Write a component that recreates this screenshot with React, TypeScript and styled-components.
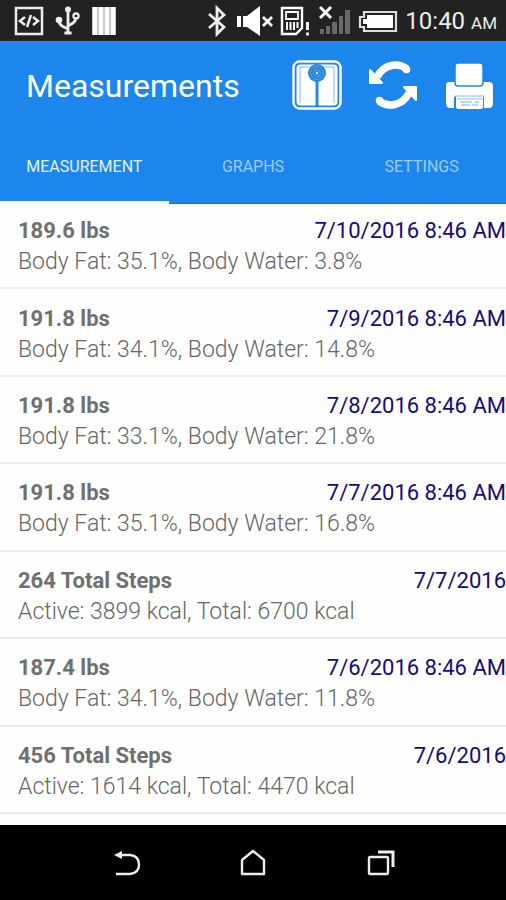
import React, { useState } from "react";
import styled, { createGlobalStyle } from "styled-components";

const GlobalStyle = createGlobalStyle`
  * { box-sizing: border-box; }
  body { margin: 0; background: #fefefe; font-family: Roboto, "Liberation Sans", sans-serif; }
  button { font: inherit; color: inherit; background: none; border: 0; padding: 0; margin: 0; cursor: pointer; }
`;

const Screen = styled.div`
  display: flex;
  flex-direction: column;
  min-height: 100vh;
`;

const StatusBar = styled.div`
  display: flex;
  align-items: center;
  justify-content: space-between;
  height: 41px;
  padding: 0 9px 0 14px;
  background: #222;
  color: #eee;
`;

const StatusGroup = styled.div<{ $gap: number }>`
  display: flex;
  align-items: center;
  gap: ${(p) => p.$gap}px;
`;

const Clock = styled.time`
  font-size: 24px;
  line-height: 30px;
  padding-top: 2px;
  white-space: nowrap;
`;

const Meridiem = styled.small`
  font-size: 17px;
`;

const Header = styled.header`
  background: #1d86ec;
  color: #fff;
`;

const AppBar = styled.div`
  display: flex;
  align-items: center;
  justify-content: space-between;
  height: 88px;
  padding: 0 12px 0 26px;
`;

const Title = styled.h1`
  margin: 0;
  padding-top: 2px;
  font-size: 32px;
  line-height: 40px;
  font-weight: 400;
`;

const Actions = styled.div`
  display: flex;
  align-items: center;
  gap: 26px;
`;

const IconButton = styled.button`
  display: flex;
`;

const Tabs = styled.div`
  display: grid;
  grid-template-columns: repeat(3, 1fr);
  height: 75px;
  border-bottom: 1px solid #176fd0;
`;

const Tab = styled.button<{ $active: boolean }>`
  && {
    padding-top: 4px;
    border-bottom: 3px solid ${(p) => (p.$active ? "#fff" : "transparent")};
    margin-bottom: -1px;
    font-size: 16px;
    line-height: 24px;
    color: ${(p) => (p.$active ? "#e4f1ff" : "#9dcbfa")};
  }
`;

const List = styled.ul`
  display: flex;
  flex: 1;
  flex-direction: column;
  margin: -2px 0 0;
  padding: 0 0 11px;
  list-style: none;
`;

const Row = styled.li`
  display: flex;
  flex: 1;
  flex-direction: column;
  justify-content: center;
  border-bottom: 2px solid #ececec;
  padding: 3px 0 0 18px;
  font-size: 22px;
  line-height: 31px;
  white-space: nowrap;
`;

const RowTop = styled.div`
  display: flex;
  justify-content: space-between;
`;

const Reading = styled.strong`
  font-weight: 700;
  color: #707070;
`;

const Stamp = styled.time`
  color: #160b7c;
`;

const Detail = styled.div`
  font-size: 23px;
  font-weight: 300;
  color: #666;
`;

const NavBar = styled.nav`
  display: grid;
  grid-template-columns: repeat(3, 1fr);
  height: 75px;
  padding: 0 63px;
  background: #000;
  color: #eee;
`;

const NavButton = styled.button`
  display: flex;
  align-items: center;
  justify-content: center;
`;

const CodeIcon = () => (
  <svg width="30" height="30" viewBox="0 0 30 30" fill="none" stroke="currentColor" strokeWidth="2.5">
    <rect x="2" y="2" width="26" height="26" />
    <path d="M11 11l-5 4 5 4M19 11l5 4-5 4M17 9l-4 12" />
  </svg>
);

const UsbIcon = () => (
  <svg width="26" height="30" viewBox="0 0 26 30" fill="none" stroke="currentColor" strokeWidth="2.8">
    <path d="M13 4v22M13 23l-6-3q-3-2-3-6M13 20l5-3q3-2 3-6" />
    <circle cx="13" cy="3.5" r="3" fill="currentColor" stroke="none" />
    <circle cx="4" cy="14" r="3.3" fill="currentColor" stroke="none" />
    <circle cx="21" cy="10" r="2.6" strokeWidth="2.2" />
    <path d="M10 26h6v2h-6z" fill="currentColor" strokeWidth="1.2" />
  </svg>
);

const BarsIcon = () => (
  <svg width="24" height="30" viewBox="0 0 24 30">
    <path d="M0 1h24v28H0z" fill="#c8c8c8" />
    <path d="M1 1h4v28H1zM7 1h4v28H7zM13 1h4v28h-4zM19 1h4v28h-4z" fill="#fff" />
  </svg>
);

const BluetoothIcon = () => (
  <svg width="18" height="32" viewBox="0 0 18 32" fill="none" stroke="currentColor" strokeWidth="2.8">
    <path d="M1 9l15 13-7 7V3l7 7L1 23" />
  </svg>
);

const MuteIcon = () => (
  <svg width="36" height="32" viewBox="0 0 36 32" fill="#fff">
    <path d="M0 11h4v11H0zM6 11h4L23 1v30L10 22H6z" />
    <path d="M26 12l9 9M35 12l-9 9" stroke="#fff" strokeWidth="2.8" />
  </svg>
);

const SimIcon = () => (
  <svg width="30" height="32" viewBox="0 0 30 32" fill="none" stroke="#fff" strokeWidth="2.4">
    <path d="M2 3h20v20l-6 6H2z" />
    <path d="M6 7h12v7H6z" strokeWidth="1.8" />
    <path d="M7 17v8M10.500 17v8M14 17v8M17.500 17v6" strokeWidth="2" />
    <path d="M27.500 17v8M27.500 27.500v3" strokeWidth="2.8" />
  </svg>
);

const SignalIcon = () => (
  <svg width="32" height="32" viewBox="0 0 32 32">
    <path d="M1 24h4v5H1zM7 21h4v8H7zM13 17h5v12h-5zM20 11h4v18h-4zM26 5h5v24h-5z" fill="#686868" />
    <path d="M1 2l11 11M12 2L1 13" stroke="#fff" strokeWidth="3" />
  </svg>
);

const BatteryIcon = () => (
  <svg width="40" height="24" viewBox="0 0 40 24">
    <path d="M6 3h32v19H6v-4H2V8h4z" fill="none" stroke="#ddd" strokeWidth="2.2" />
    <path d="M9 6h26v13H9v-4H5v-5h4z" fill="#fff" />
  </svg>
);

const ScaleIcon = () => (
  <svg width="50" height="50" viewBox="0 0 50 50">
    <rect x="1.500" y="1.500" width="47" height="47" rx="6" fill="none" stroke="#fff" strokeWidth="2.4" />
    <rect x="4.500" y="4.500" width="41" height="41" rx="4" fill="#fff" />
    <path d="M8 43V7h34v36" fill="none" stroke="#5da9f2" strokeWidth="0.800" />
    <path d="M23.500 20h3v26h-3z" fill="#2389e9" />
    <circle cx="25" cy="13" r="9" fill="#2683dc" />
    <circle cx="25" cy="13" r="6.500" fill="none" stroke="#5ca4e8" />
    <circle cx="25" cy="13" r="3.500" fill="none" stroke="#5ca4e8" />
    <circle cx="25" cy="13" r="1.200" fill="#d9ecff" />
  </svg>
);

const SyncIcon = () => (
  <svg width="50" height="50" viewBox="0 0 50 50">
    <path d="M9 17C16 4 30 2 39 9" fill="none" stroke="#fff" strokeWidth="7.500" />
    <circle cx="38.500" cy="9.500" r="3.800" fill="#fff" />
    <path d="M2 10v13h12z" fill="#fff" stroke="#fff" strokeWidth="2" strokeLinejoin="round" />
    <path d="M41 33C34 46 20 48 11 41" fill="none" stroke="#fff" strokeWidth="7.500" />
    <circle cx="11.500" cy="40.500" r="3.800" fill="#fff" />
    <path d="M48 40V27H36z" fill="#fff" stroke="#fff" strokeWidth="2" strokeLinejoin="round" />
  </svg>
);

const PrinterIcon = () => (
  <svg width="50" height="50" viewBox="0 0 50 50">
    <path d="M5 22h34l6 0q4 0 4 4v17q0 5-4 5H6q-4 0-4-5V26q0-4 3-4z" fill="#fff" />
    <rect x="11" y="3" width="28" height="23" rx="3" fill="#fff" stroke="#1d86ec" strokeWidth="1.500" />
    <path d="M10 50V38q0-2 2-2h26q2 0 2 2v12z" fill="#1d86ec" />
    <path d="M12 36h27v11q0 2-2 2H14q-2 0-2-2z" fill="#fff" />
    <path d="M11 36h29M13 39h25" stroke="#85bef5" strokeWidth="1" />
    <path d="M16 42h12M31 42h4M17 45h9M28 45h6" stroke="#6fb2f3" strokeWidth="1.200" />
  </svg>
);

const BackIcon = () => (
  <svg width="30" height="30" viewBox="0 0 30 30" fill="none" stroke="currentColor" strokeWidth="2.400">
    <path d="M8 7h11q9 1 9 9.500T19 26H5" />
    <path d="M3 7l8-4v8z" fill="currentColor" stroke="none" />
  </svg>
);

const HomeIcon = () => (
  <svg width="30" height="30" viewBox="0 0 30 30" fill="none" stroke="currentColor" strokeWidth="2.400" strokeLinejoin="round">
    <path d="M4 12L15 3l11 9v14H4z" />
  </svg>
);

const RecentsIcon = () => (
  <svg width="30" height="30" viewBox="0 0 30 30" fill="none" stroke="currentColor" strokeWidth="2.400">
    <rect x="4" y="9" width="19" height="17" rx="1" />
    <path d="M13 4h15v15" strokeWidth="3" />
  </svg>
);

const tabs = ["MEASUREMENT", "GRAPHS", "SETTINGS"];

const entries = [
  { reading: "189.6 lbs", stamp: "7/10/2016 8:46 AM", detail: "Body Fat: 35.1%, Body Water: 3.8%" },
  { reading: "191.8 lbs", stamp: "7/9/2016 8:46 AM", detail: "Body Fat: 34.1%, Body Water: 14.8%" },
  { reading: "191.8 lbs", stamp: "7/8/2016 8:46 AM", detail: "Body Fat: 33.1%, Body Water: 21.8%" },
  { reading: "191.8 lbs", stamp: "7/7/2016 8:46 AM", detail: "Body Fat: 35.1%, Body Water: 16.8%" },
  { reading: "264 Total Steps", stamp: "7/7/2016", detail: "Active: 3899 kcal, Total: 6700 kcal" },
  { reading: "187.4 lbs", stamp: "7/6/2016 8:46 AM", detail: "Body Fat: 34.1%, Body Water: 11.8%" },
  { reading: "456 Total Steps", stamp: "7/6/2016", detail: "Active: 1614 kcal, Total: 4470 kcal" },
];

export default function App() {
  const [active, setActive] = useState(0);
  return (
    <Screen>
      <GlobalStyle />
      <StatusBar>
        <StatusGroup $gap={11}>
          <CodeIcon />
          <UsbIcon />
          <BarsIcon />
        </StatusGroup>
        <StatusGroup $gap={7}>
          <StatusGroup $gap={11}>
            <BluetoothIcon />
            <MuteIcon />
          </StatusGroup>
          <StatusGroup $gap={9}>
            <SimIcon />
            <SignalIcon />
          </StatusGroup>
          <BatteryIcon />
          <Clock>
            10:40 <Meridiem>AM</Meridiem>
          </Clock>
        </StatusGroup>
      </StatusBar>
      <Header>
        <AppBar>
          <Title>Measurements</Title>
          <Actions>
            <IconButton aria-label="Weigh"><ScaleIcon /></IconButton>
            <IconButton aria-label="Sync"><SyncIcon /></IconButton>
            <IconButton aria-label="Print"><PrinterIcon /></IconButton>
          </Actions>
        </AppBar>
        <Tabs role="tablist">
          {tabs.map((label, i) => (
            <Tab key={label} role="tab" aria-selected={i === active} $active={i === active} onClick={() => setActive(i)}>
              {label}
            </Tab>
          ))}
        </Tabs>
      </Header>
      <List>
        {entries.map((e) => (
          <Row key={e.reading + e.stamp}>
            <RowTop>
              <Reading>{e.reading}</Reading>
              <Stamp>{e.stamp}</Stamp>
            </RowTop>
            <Detail>{e.detail}</Detail>
          </Row>
        ))}
      </List>
      <NavBar>
        <NavButton aria-label="Back"><BackIcon /></NavButton>
        <NavButton aria-label="Home"><HomeIcon /></NavButton>
        <NavButton aria-label="Recent apps"><RecentsIcon /></NavButton>
      </NavBar>
    </Screen>
  );
}
